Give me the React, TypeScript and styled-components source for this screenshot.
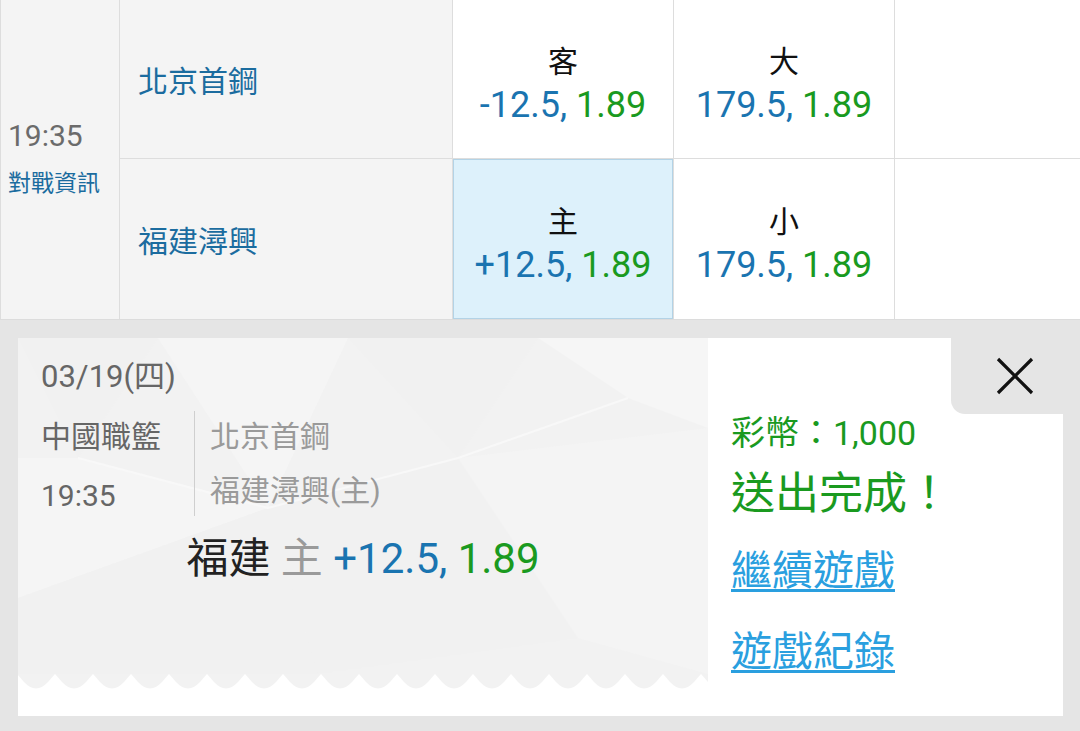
import styled, { createGlobalStyle } from 'styled-components';

const GlobalStyle = createGlobalStyle`
  html, body {
    margin: 0;
    padding: 0;
    background: #e5e5e5;
  }
  body {
    font-family: Roboto, "Noto Sans CJK TC", sans-serif;
    width: 1080px;
    height: 731px;
    overflow: hidden;
  }
`;

const BLUE = '#1a74b0';
const GREEN = '#1a9a1f';

const odds = [
  { label: '客', line: '-12.5', price: '1.89', picked: false },
  { label: '大', line: '179.5', price: '1.89', picked: false },
  { label: '主', line: '+12.5', price: '1.89', picked: true },
  { label: '小', line: '179.5', price: '1.89', picked: false },
];

const OddsBox = ({ index }: { index: number }) => {
  const o = odds[index];
  return (
    <OddsCell $picked={o.picked}>
      <OddsLabel>{o.label}</OddsLabel>
      <OddsValue>
        <Line>{o.line}, </Line>
        <Price>{o.price}</Price>
      </OddsValue>
    </OddsCell>
  );
};

const App = () => {
  return (
    <>
      <GlobalStyle />
      <Page>
        <GameTable>
          <TimeCell>
            <KickOff>19:35</KickOff>
            <InfoLink>對戰資訊</InfoLink>
          </TimeCell>
          <TeamCell>北京首鋼</TeamCell>
          <OddsBox index={0} />
          <OddsBox index={1} />
          <EmptyCell />
          <TeamCell>福建潯興</TeamCell>
          <OddsBox index={2} />
          <OddsBox index={3} />
          <EmptyCell />
        </GameTable>

        <ResultPanel>
          <ResultCard>
            <TicketPane>
              <Ticket>
                <PatternBg viewBox="0 0 690 336" preserveAspectRatio="none">
                  <polygon points="0,0 140,0 60,120" fill="#f1f1f1" />
                  <polygon points="140,0 330,0 250,170" fill="#f5f5f5" />
                  <polygon points="330,0 520,0 440,120" fill="#f1f1f1" />
                  <polygon points="520,0 690,0 690,90 610,60" fill="#f6f6f6" />
                  <polygon points="0,120 60,120 250,170 0,260" fill="#f5f5f5" />
                  <polygon points="250,170 440,120 560,300 300,336" fill="#f1f1f1" />
                  <polygon points="440,120 690,90 690,336 560,300" fill="#f4f4f4" />
                  <polygon points="0,260 250,170 300,336 0,336" fill="#f1f1f1" />
                  <polyline points="60,120 250,170 440,120 610,60" fill="none" stroke="#f8f8f8" strokeWidth="2" />
                </PatternBg>
                <TicketDate>03/19(四)</TicketDate>
                <MatchRow>
                  <LeagueCol>
                    <GrayText>中國職籃</GrayText>
                    <GrayText>19:35</GrayText>
                  </LeagueCol>
                  <TeamsCol>
                    <LightText>北京首鋼</LightText>
                    <LightText>福建潯興(主)</LightText>
                  </TeamsCol>
                </MatchRow>
                <BetLine>
                  <BetTeam>福建</BetTeam> <BetSide>主</BetSide> <Line>+12.5, </Line>
                  <Price>1.89</Price>
                </BetLine>
              </Ticket>
              <Scallops viewBox="0 0 690 15" preserveAspectRatio="none">
                <defs>
                  <pattern id="scallop" x="-1" y="0" width="38" height="15" patternUnits="userSpaceOnUse">
                    <path d="M0 0 H38 L31 8 Q19 21 7 8 Z" fill="#f2f2f2" />
                  </pattern>
                </defs>
                <rect width="690" height="15" fill="url(#scallop)" />
              </Scallops>
            </TicketPane>

            <DonePane>
              <CloseTab>
                <svg width="38" height="38" viewBox="0 0 38 38">
                  <path d="M2 2 L36 36 M36 2 L2 36" stroke="#111" strokeWidth="3.2" />
                </svg>
              </CloseTab>
              <Coins>彩幣：1,000</Coins>
              <DoneTitle>送出完成！</DoneTitle>
              <ActionLink $first>繼續遊戲</ActionLink>
              <ActionLink>遊戲紀錄</ActionLink>
            </DonePane>
          </ResultCard>
        </ResultPanel>
      </Page>
    </>
  );
};

export default App;

const Page = styled.div`
  width: 1080px;
  height: 731px;
  display: flex;
  flex-direction: column;
  background: #e5e5e5;
`;

const GameTable = styled.div`
  display: grid;
  grid-template-columns: 118px 332px 220px 220px 1fr;
  grid-template-rows: 158px 160px;
  gap: 1px;
  padding-left: 1px;
  background: #dddddd;
  border-bottom: 1px solid #dcdcdc;
`;

const TimeCell = styled.div`
  grid-row: 1 / span 2;
  background: #f4f4f4;
  display: flex;
  flex-direction: column;
  justify-content: center;
  gap: 12px;
  padding-left: 7px;
`;

const KickOff = styled.div`
  font-size: 30px;
  line-height: 36px;
  color: #6b6b6b;
`;

const InfoLink = styled.div`
  font-size: 23px;
  line-height: 36px;
  color: #1b6c9f;
`;

const TeamCell = styled.div`
  background: #f4f4f4;
  display: flex;
  align-items: center;
  padding-left: 18px;
  font-size: 30px;
  color: #1b6c9f;
`;

const OddsCell = styled.div<{ $picked: boolean }>`
  background: ${({ $picked }) => ($picked ? '#ddf1fb' : '#ffffff')};
  box-shadow: ${({ $picked }) => ($picked ? 'inset 0 0 0 1px #b3d3e6' : 'none')};
  display: flex;
  flex-direction: column;
  align-items: center;
  justify-content: center;
  padding-top: 12px;
`;

const EmptyCell = styled.div`
  background: #ffffff;
`;

const OddsLabel = styled.div`
  font-size: 30px;
  line-height: 40px;
  color: #111;
`;

const OddsValue = styled.div`
  font-size: 36px;
  line-height: 46px;
  white-space: pre;
`;

const Line = styled.span`
  color: ${BLUE};
  white-space: pre;
`;

const Price = styled.span`
  color: ${GREEN};
`;

const ResultPanel = styled.div`
  flex: 1;
  padding: 18px 17px 15px 18px;
  display: flex;
`;

const ResultCard = styled.div`
  flex: 1;
  display: flex;
  background: #ffffff;
`;

const TicketPane = styled.div`
  width: 690px;
  display: flex;
  flex-direction: column;
`;

const Ticket = styled.div`
  position: relative;
  height: 336px;
  background: #f2f2f2;
  padding: 20px 0 0 23px;
  box-sizing: border-box;
  display: flex;
  flex-direction: column;
  overflow: hidden;
`;

const PatternBg = styled.svg`
  position: absolute;
  inset: 0;
  width: 100%;
  height: 100%;
`;

const TicketDate = styled.div`
  position: relative;
  font-size: 31px;
  line-height: 38px;
  color: #666;
`;

const MatchRow = styled.div`
  position: relative;
  display: flex;
  margin-top: 15px;
`;

const LeagueCol = styled.div`
  width: 153px;
  display: flex;
  flex-direction: column;
  gap: 19px;
  padding-top: 6px;
`;

const TeamsCol = styled.div`
  border-left: 1px solid #cfcfcf;
  padding: 6px 0 5px 15px;
  display: flex;
  flex-direction: column;
  gap: 14px;
`;

const GrayText = styled.div`
  font-size: 30px;
  line-height: 40px;
  color: #666;
`;

const LightText = styled.div`
  font-size: 30px;
  line-height: 40px;
  color: #9a9a9a;
`;

const BetLine = styled.div`
  position: relative;
  margin-top: 18px;
  margin-left: -23px;
  text-align: center;
  font-size: 42px;
  line-height: 50px;
  white-space: pre;
`;

const BetTeam = styled.span`
  color: #222;
`;

const BetSide = styled.span`
  color: #9a9a9a;
`;

const Scallops = styled.svg`
  display: block;
  width: 690px;
  height: 15px;
`;

const DonePane = styled.div`
  flex: 1;
  display: flex;
  flex-direction: column;
  align-items: flex-start;
  padding-left: 23px;
`;

const CloseTab = styled.div`
  align-self: flex-end;
  width: 112px;
  height: 76px;
  box-sizing: border-box;
  padding-right: 29px;
  background: #e5e5e5;
  border-bottom-left-radius: 14px;
  display: flex;
  align-items: center;
  justify-content: flex-end;
`;

const Coins = styled.div`
  font-size: 34px;
  line-height: 38px;
  color: ${GREEN};
`;

const DoneTitle = styled.div`
  margin-top: 17px;
  font-size: 44px;
  line-height: 50px;
  color: ${GREEN};
`;

const ActionLink = styled.a<{ $first?: boolean }>`
  margin-top: ${({ $first }) => ($first ? '27px' : '31px')};
  font-size: 41px;
  line-height: 50px;
  color: #2a9fdf;
  text-decoration: underline;
  text-decoration-thickness: 3px;
  text-underline-offset: 4px;
  cursor: pointer;
`;
